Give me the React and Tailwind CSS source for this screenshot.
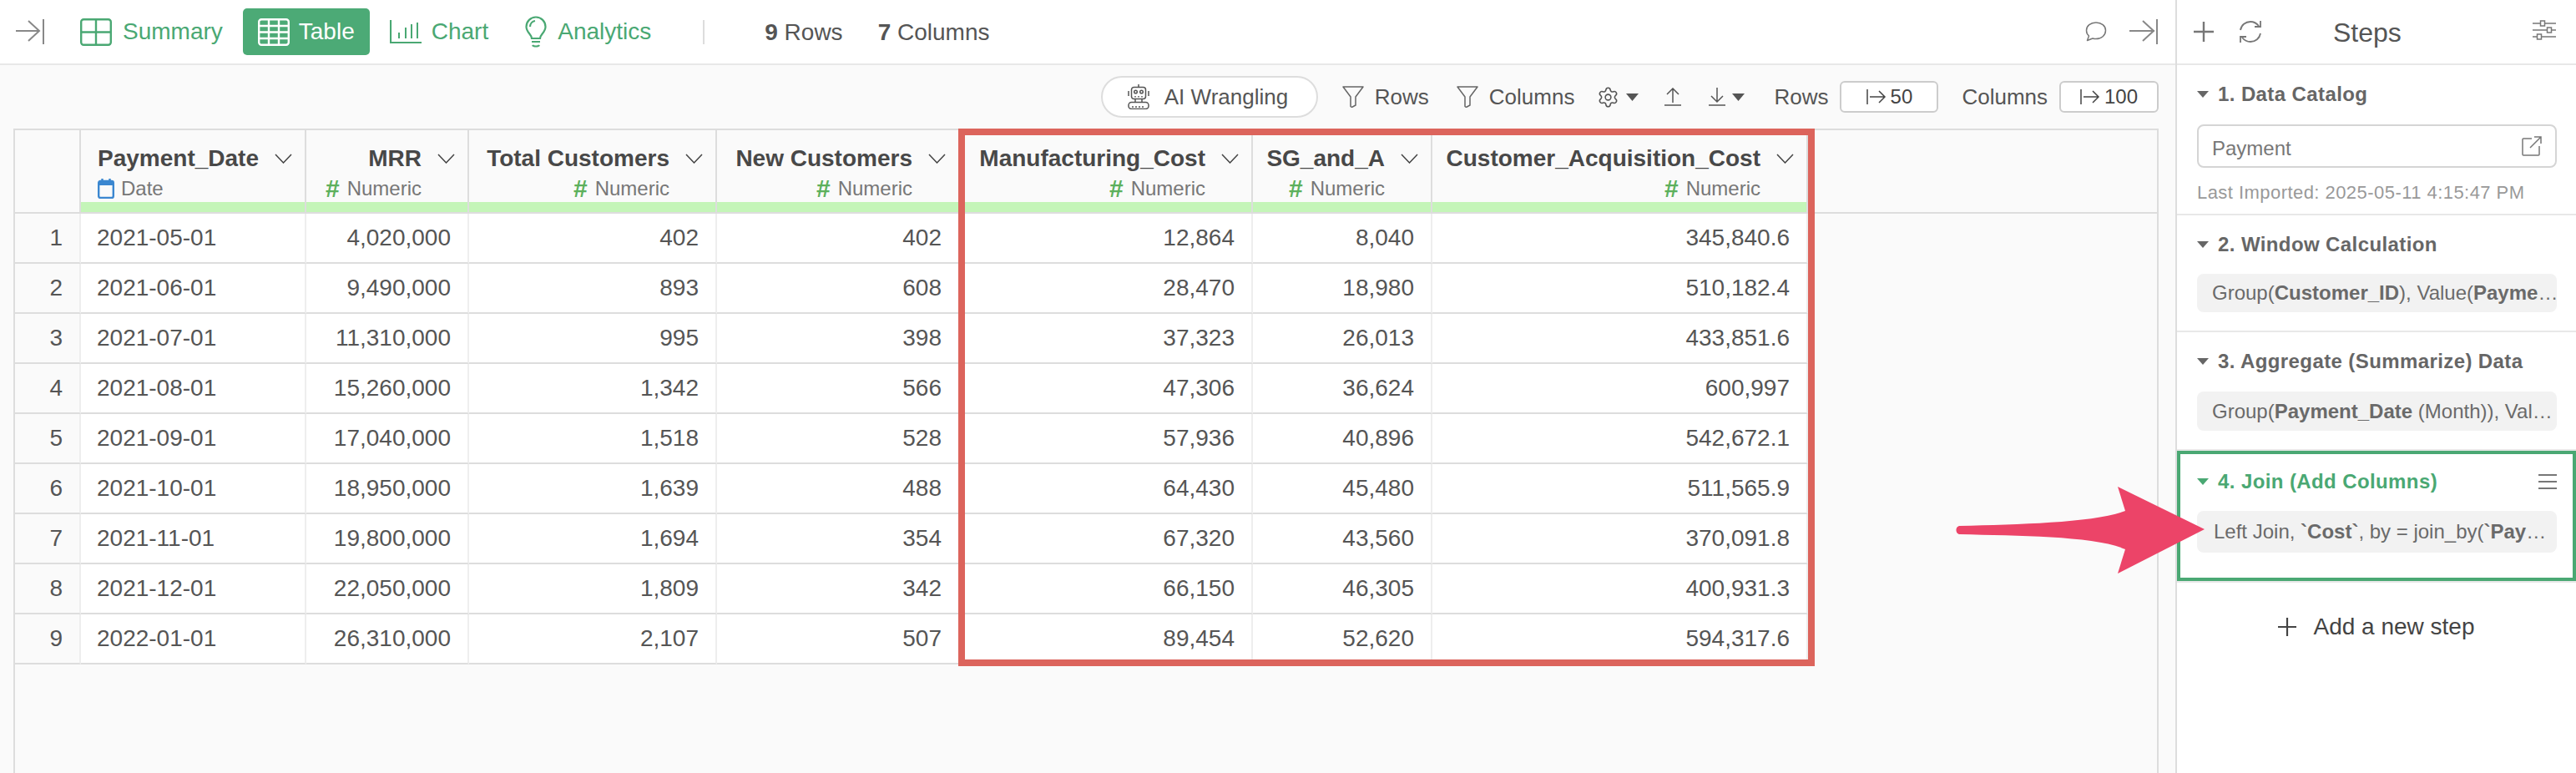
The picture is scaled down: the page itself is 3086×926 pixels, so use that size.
import { Settings } from 'lucide-react';

const GREEN = '#4aa873';

const rows = [
  ['1', '2021-05-01', '4,020,000', '402', '402', '12,864', '8,040', '345,840.6'],
  ['2', '2021-06-01', '9,490,000', '893', '608', '28,470', '18,980', '510,182.4'],
  ['3', '2021-07-01', '11,310,000', '995', '398', '37,323', '26,013', '433,851.6'],
  ['4', '2021-08-01', '15,260,000', '1,342', '566', '47,306', '36,624', '600,997'],
  ['5', '2021-09-01', '17,040,000', '1,518', '528', '57,936', '40,896', '542,672.1'],
  ['6', '2021-10-01', '18,950,000', '1,639', '488', '64,430', '45,480', '511,565.9'],
  ['7', '2021-11-01', '19,800,000', '1,694', '354', '67,320', '43,560', '370,091.8'],
  ['8', '2021-12-01', '22,050,000', '1,809', '342', '66,150', '46,305', '400,931.3'],
  ['9', '2022-01-01', '26,310,000', '2,107', '507', '89,454', '52,620', '594,317.6'],
];

const columns = ['Total Customers', 'New Customers', 'Manufacturing_Cost', 'SG_and_A', 'Customer_Acquisition_Cost'];

const gridCols = 'grid grid-cols-[79px_270px_195px_297px_291px_351px_215px_450px]';

function Collapse({ flip }) {
  return (
    <svg width="36" height="32" viewBox="0 0 36 32" fill="none" stroke="#888" strokeWidth="2">
      {flip ? <path d="M1 15h30M17 3l13 12-13 12" /> : <path d="M1 15h28M16 3l13 12-13 12" />}
      <path d="M34 1v30" />
    </svg>
  );
}

function Chevron() {
  return (
    <svg width="21" height="12" viewBox="0 0 21 12" fill="none" stroke="#444" strokeWidth="1.5" className="shrink-0">
      <path d="M1 1l9.500 10L20 1" />
    </svg>
  );
}

function Caret({ color = '#666', w = 14, h = 8 }) {
  return (
    <svg width={w} height={h} viewBox="0 0 14 8" preserveAspectRatio="none" className="shrink-0">
      <path d="M0 0h14L7 8z" fill={color} />
    </svg>
  );
}

function Funnel() {
  return (
    <svg width="26" height="26" viewBox="0 0 26 26" fill="none" stroke="#666" strokeWidth="1.500" strokeLinejoin="round">
      <path d="M1 1h24L16 13v10l-4.500 2.500-1.500-1V13z" />
    </svg>
  );
}

function Robot() {
  return (
    <svg width="26" height="30" viewBox="0 0 26 30" fill="none" stroke="#555" strokeWidth="1.500">
      <path d="M13 0v3M1 8v6M25 8v6" />
      <rect x="4.500" y="3.500" width="17" height="14" rx="3" />
      <circle cx="9.500" cy="9" r="1.800" />
      <circle cx="16.500" cy="9" r="1.800" />
      <path d="M9 14v1.500M13 14v1.500M17 14v1.500M9 18v3M17 18v3" />
      <rect x="1" y="21.500" width="24" height="8" rx="3.500" />
      <path d="M6 26v2M10 26v2M14 26v2M18 26v2" />
    </svg>
  );
}

function UpDown({ down }) {
  return (
    <svg width="20" height="22" viewBox="0 0 20 22" fill="none" stroke="#555" strokeWidth="1.500">
      {down ? <path d="M10 0v16M3 10l7 7 7-7" /> : <path d="M10 18V1M3 8l7-7 7 7" />}
      <path d="M0 21h20" />
    </svg>
  );
}

function LimitBox({ w, value }) {
  return (
    <div className={`${w} h-[38px] rounded-[6px] border-2 border-[#ccc] bg-white flex items-center justify-center gap-[5px] text-[24px] text-[#444]`}>
      <svg width="24" height="20" viewBox="0 0 24 20" fill="none" stroke="#444" strokeWidth="1.500">
        <path d="M1 1v18M4 10h18M15 3l7 7-7 7" />
      </svg>
      {value}
    </div>
  );
}

function HeaderCell({ title, sub, left }) {
  return (
    <div className="h-[98px] border-r-2 border-[#ddd] flex flex-col">
      <div className={`mt-[18px] h-[32px] flex items-center pr-[15px] text-[28px] font-bold text-[#484848] whitespace-nowrap ${left ? 'pl-[20px] justify-between' : 'justify-end gap-[19px]'}`}>
        <span>{title}</span>
        <Chevron />
      </div>
      <div className={`mt-[6px] h-[28px] flex items-center text-[24px] text-[#777] ${left ? 'pl-[20px] gap-[8px]' : 'justify-end gap-[9px] pr-[55px]'}`}>
        {sub === 'Date' ? (
          <svg width="20" height="24" viewBox="0 0 20 24" fill="none" className="shrink-0">
            <rect x="1.200" y="3" width="17.600" height="20" rx="2" stroke="#3b87d0" strokeWidth="2.400" />
            <path d="M1 3.500h18V8H1z" fill="#3b87d0" />
            <path d="M5.500 0v4M14.500 0v4" stroke="#3b87d0" strokeWidth="2.400" />
          </svg>
        ) : (
          <span className="font-bold text-[30px] leading-none text-[#5cb05c]">#</span>
        )}
        <span>{sub}</span>
      </div>
      <div className="mt-[2px] h-[12px] bg-[#c4f5b8]" />
    </div>
  );
}

function StepBox({ children, pad = 'pl-[18px]' }) {
  return (
    <div className={`h-full rounded-[8px] bg-[#f2f2f2] flex items-center whitespace-nowrap text-[24px] text-[#6a6a6a] ${pad}`}>
      <div>{children}</div>
    </div>
  );
}

function StepTitle({ color = '#666', children }) {
  return (
    <div className="h-[32px] flex items-center gap-[11px] text-[24px] font-bold tracking-[0.4px]" style={{ color }}>
      <Caret color={color} />
      {children}
    </div>
  );
}

export default function App() {
  return (
    <div className="relative w-[3086px] h-[926px] overflow-hidden flex bg-white font-['Liberation_Sans',Arial,sans-serif]">
      <div className="w-[2606px] flex flex-col">
        {/* top bar */}
        <div className="h-[78px] shrink-0 border-b-2 border-[#e8e8e8] flex items-center pl-[18px] pr-[20px]">
          <Collapse />
          <div className="ml-[24px] h-[56px] px-[18px] flex items-center gap-[13px] text-[28px] text-[#4aa873]">
            <svg width="38" height="33" viewBox="0 0 38 33" fill="none" stroke={GREEN} strokeWidth="2.400">
              <rect x="1.200" y="1.200" width="35.600" height="30.600" rx="3" />
              <path d="M19 1v31M1 16.500h36" />
            </svg>
            Summary
          </div>
          <div className="ml-[6px] h-[56px] px-[18px] rounded-[5px] bg-[#4caa76] flex items-center gap-[11px] text-[28px] text-white">
            <svg width="38" height="33" viewBox="0 0 38 33" fill="none" stroke="#fff" strokeWidth="2.400">
              <rect x="1.200" y="1.200" width="35.600" height="30.600" rx="3" />
              <path d="M13 1v31M25 1v31M1 9h36M1 16.500h36M1 24h36" />
            </svg>
            Table
          </div>
          <div className="ml-[6px] h-[56px] px-[18px] flex items-center gap-[12px] text-[28px] text-[#4aa873]">
            <svg width="38" height="28" viewBox="0 0 38 28" fill="none" stroke={GREEN} strokeWidth="2.200">
              <path d="M1 0v27h37" />
              <path d="M11 15v7M19 9v13M26 5v17M33 3v19" strokeWidth="2" />
            </svg>
            Chart
          </div>
          <div className="ml-[8px] h-[56px] px-[18px] flex items-center gap-[13px] text-[28px] text-[#4aa873]">
            <svg width="26" height="38" viewBox="0 0 26 38" fill="none" stroke={GREEN} strokeWidth="2.200">
              <path d="M8 27c0-5-6.500-7-6.500-14a11.500 11.500 0 0 1 23 0c0 7-6.500 9-6.500 14z" />
              <path d="M6 13c0-4 3-6.500 6-7M8 31h10M9 35c1 2 7 2 8 0" />
            </svg>
            Analytics
          </div>
          <div className="ml-[44px] w-[2px] h-[29px] bg-[#ddd]" />
          <div className="ml-[72px] mt-[2px] text-[28px] text-[#555]"><b className="font-bold">9</b> Rows</div>
          <div className="ml-[42px] mt-[2px] text-[28px] text-[#555]"><b className="font-bold">7</b> Columns</div>
          <div className="ml-auto mr-[26px]">
            <svg width="26" height="24" viewBox="0 0 26 24" fill="none" stroke="#777" strokeWidth="1.500" strokeLinejoin="round">
              <path d="M13 1C6.500 1 1.500 5 1.500 10.500c0 2.800 1.200 5 3 6.500L2.500 22.500l6.500-2.500c1.300.4 2.600.6 4 .6 6.500 0 11.500-4.400 11.500-10S19.500 1 13 1z" />
            </svg>
          </div>
          <Collapse flip />
        </div>

        <div className="flex-1 bg-[#fafafa] flex flex-col">
          {/* toolbar */}
          <div className="h-[76px] shrink-0 flex items-center justify-end pr-[20px] text-[26px] text-[#555]">
            <div className="h-[50px] w-[260px] rounded-full border-2 border-[#ddd] bg-white flex items-center pl-[30px] gap-[18px]">
              <Robot />
              AI Wrangling
            </div>
            <div className="ml-[29px] flex items-center gap-[13px]"><Funnel />Rows</div>
            <div className="ml-[33px] flex items-center gap-[13px]"><Funnel />Columns</div>
            <div className="ml-[27px] flex items-center gap-[8px]">
              <Settings size={27} strokeWidth={1.4} color="#555" />
              <Caret color="#555" w={15} h={9} />
            </div>
            <div className="ml-[31px]"><UpDown /></div>
            <div className="ml-[33px] flex items-center gap-[8px]">
              <UpDown down />
              <Caret color="#555" w={15} h={9} />
            </div>
            <div className="ml-[35px]">Rows</div>
            <div className="ml-[14px]"><LimitBox w="w-[118px]" value="50" /></div>
            <div className="ml-[28px]">Columns</div>
            <div className="ml-[14px]"><LimitBox w="w-[119px]" value="100" /></div>
          </div>

          {/* table */}
          <div className="relative flex-1 ml-[16px] mr-[20px] border-2 border-b-0 border-[#ddd]">
            <div className="border-b-2 border-[#ddd]">
              <div className={gridCols}>
                <div className="h-[98px] border-r-2 border-[#ddd]" />
                <HeaderCell left title="Payment_Date" sub="Date" />
                <HeaderCell title="MRR" sub="Numeric" />
                {columns.map(c => <HeaderCell key={c} title={c} sub="Numeric" />)}
              </div>
            </div>
            {rows.map(r => (
              <div key={r[0]} className={gridCols}>
                {r.map((v, i) => (
                  <div key={i} className={`h-[60px] border-b-2 border-b-[#ddd] border-r-2 border-r-[#eee] flex items-center pr-[20px] text-[28px] text-[#555] ${i === 1 ? 'justify-start pl-[19px]' : 'justify-end pl-[20px]'} ${i === 0 ? 'bg-[#fafafa]' : 'bg-white'}`}>
                    {v}
                  </div>
                ))}
              </div>
            ))}
            <div className="absolute left-[1130px] top-[-2px] w-[1026px] h-[644px] border-8 border-[#dc645c]" />
          </div>
        </div>
      </div>

      {/* steps sidebar */}
      <div className="w-[480px] border-l-2 border-[#ddd] flex flex-col">
        <div className="relative h-[78px] shrink-0 border-b-2 border-[#e8e8e8] flex items-center pl-[20px] pr-[24px]">
          <svg width="24" height="24" viewBox="0 0 24 24" fill="none" stroke="#777" strokeWidth="2.400">
            <path d="M12 0v24M0 12h24" />
          </svg>
          <svg className="ml-[30px]" width="28" height="28" viewBox="0 0 28 28" fill="none" stroke="#777" strokeWidth="1.800">
            <path d="M2 12C3 6 8 2 14 2c4 0 7.500 2 10 5M26 1v7h-7M26 16c-1 6-6 10-12 10-4 0-7.500-2-10-5M2 27v-7h7" />
          </svg>
          <div className="ml-[85px] mt-[2px] text-[32px] text-[#555]">Steps</div>
          <svg className="ml-auto mb-[4px]" width="28" height="24" viewBox="0 0 28 24" fill="none" stroke="#777" strokeWidth="1.500">
            <path d="M0 4h9M15 4h13M0 12h17M23 12h5M0 20h5M11 20h17" />
            <rect x="9.500" y="1" width="5" height="6" />
            <rect x="17.500" y="9" width="5" height="6" />
            <rect x="5.500" y="17" width="5" height="6" />
          </svg>
        </div>

        <div className="h-[180px] shrink-0 border-b-2 border-[#e8e8e8] pt-[19px] pl-[24px] pr-[23px]">
          <StepTitle>1. Data Catalog</StepTitle>
          <div className="mt-[20px] h-[52px] rounded-[8px] border-2 border-[#d5d5d5] flex items-center justify-between pl-[16px] pr-[16px] text-[24px] text-[#777]">
            <span className="pt-[6px]">Payment</span>
            <svg width="24" height="24" viewBox="0 0 24 24" fill="none" stroke="#777" strokeWidth="1.500">
              <path d="M12 3H2a1 1 0 0 0-1 1v18a1 1 0 0 0 1 1h18a1 1 0 0 0 1-1V12M10 14L23 1M15 1h8v8" />
            </svg>
          </div>
          <div className="mt-[14px] h-[30px] flex items-center text-[22px] tracking-[0.45px] text-[#999] whitespace-nowrap">
            Last Imported: 2025-05-11 4:15:47 PM
          </div>
        </div>

        <div className="h-[140px] shrink-0 border-b-2 border-[#e8e8e8] pt-[19px] pl-[24px] pr-[23px]">
          <StepTitle>2. Window Calculation</StepTitle>
          <div className="mt-[19px] h-[46px]">
            <StepBox>Group(<b>Customer_ID</b>), Value(<b>Payme</b>…</StepBox>
          </div>
        </div>

        <div className="h-[142px] shrink-0 border-b-2 border-[#e8e8e8] pt-[19px] pl-[24px] pr-[23px]">
          <StepTitle>3. Aggregate (Summarize) Data</StepTitle>
          <div className="mt-[20px] h-[47px]">
            <StepBox>Group(<b>Payment_Date</b> (Month)), Val…</StepBox>
          </div>
        </div>

        <div className="h-[158px] shrink-0 border-b-2 border-[#e8e8e8]">
          <div className="h-[156px] border-4 border-[#4aa873] pt-[17px] pl-[20px] pr-[19px]">
            <div className="flex items-center justify-between">
              <StepTitle color={GREEN}>4. Join (Add Columns)</StepTitle>
              <svg width="22" height="18" viewBox="0 0 22 18" fill="none" stroke="#777" strokeWidth="2">
                <path d="M0 1h22M0 9h22M0 17h22" />
              </svg>
            </div>
            <div className="mt-[19px] h-[50px]">
              <StepBox pad="pl-[20px]">Left Join, <b>`Cost`</b>, by = join_by(<b>`Pay</b>…</StepBox>
            </div>
          </div>
        </div>

        <div className="mt-[37px] h-[32px] flex items-center justify-center gap-[20px] text-[28px] text-[#444]">
          <svg width="22" height="22" viewBox="0 0 22 22" fill="none" stroke="#444" strokeWidth="2.200">
            <path d="M11 0v22M0 11h22" />
          </svg>
          Add a new step
        </div>
      </div>

      {/* callout arrow */}
      <svg className="absolute left-[2340px] top-[580px]" width="305" height="110" viewBox="0 0 305 110">
        <path d="M197 3L301 54L197 107L206 78C170 62 80 62 8 60C2 60 2 50 8 50C80 48 170 46 206 32z" fill="#ec4468" />
      </svg>
    </div>
  );
}
